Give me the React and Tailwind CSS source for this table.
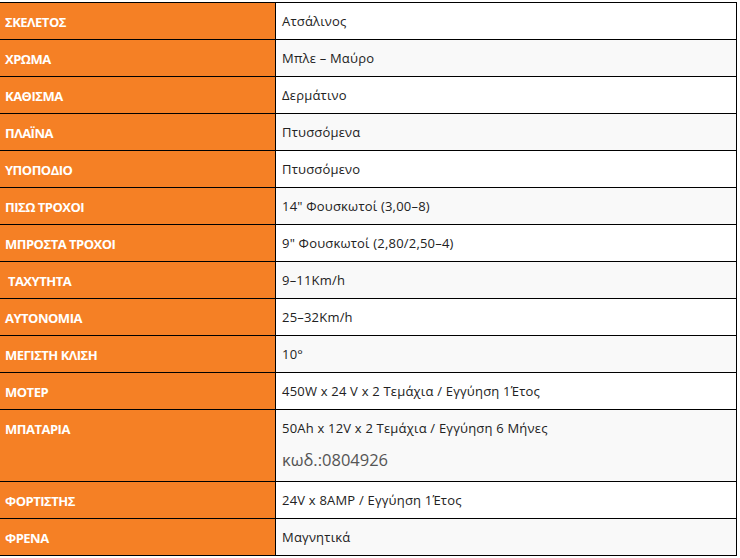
import React from "react";

const specs = [
  { label: "ΣΚΕΛΕΤΟΣ", value: "Ατσάλινος" },
  { label: "ΧΡΩΜΑ", value: "Μπλε – Μαύρο" },
  { label: "ΚΑΘΙΣΜΑ", value: "Δερμάτινο" },
  { label: "ΠΛΑΪΝΑ", value: "Πτυσσόμενα" },
  { label: "ΥΠΟΠΟΔΙΟ", value: "Πτυσσόμενο" },
  { label: "ΠΙΣΩ ΤΡΟΧΟΙ", value: "14\" Φουσκωτοί (3,00–8)" },
  { label: "ΜΠΡΟΣΤΑ ΤΡΟΧΟΙ", value: "9\" Φουσκωτοί (2,80/2,50–4)" },
  { label: "\u00a0ΤΑΧΥΤΗΤΑ", value: "9–11Km/h" },
  { label: "ΑΥΤΟΝΟΜΙΑ", value: "25–32Km/h" },
  { label: "ΜΕΓΙΣΤΗ ΚΛΙΣΗ", value: "10°" },
  { label: "ΜΟΤΕΡ", value: "450W x 24 V x 2 Τεμάχια / Εγγύηση 1Έτος" },
  { label: "ΜΠΑΤΑΡΙΑ", value: "50Ah x 12V x 2 Τεμάχια / Εγγύηση 6 Μήνες", code: "κωδ.:0804926" },
  { label: "ΦΟΡΤΙΣΤΗΣ", value: "24V x 8AMP / Εγγύηση 1Έτος" },
  { label: "ΦΡΕΝΑ", value: "Μαγνητικά" },
];

export default function App() {
  return (
    <div className="w-[740px] h-[558px] bg-white pt-[2px] font-['Open_Sans','Noto_Sans',sans-serif]">
      <div className="w-[737px] border-t border-r border-b border-black">
        {specs.map((row, i) => (
          <div
            key={i}
            className={`flex ${i > 0 ? "border-t border-black" : ""} ${i % 2 === 1 ? "bg-[#f9f9f9]" : "bg-white"}`}
          >
            <div className="w-[275px] shrink-0 bg-[#f58025] px-[5px] pt-[10px] pb-[8px] text-[13px] leading-[18px] font-bold text-white tracking-[-0.5px] whitespace-pre">
              {row.label}
            </div>
            <div className="flex-1 border-l border-black px-[6px] py-[9px] text-[13px] leading-[18px] tracking-[0.2px] text-[#222]">
              <div>{row.value}</div>
              {row.code && (
                <div className="mt-[12px] mb-[1px] text-[16.5px] leading-[22px] tracking-normal text-[#555]">{row.code}</div>
              )}
            </div>
          </div>
        ))}
      </div>
    </div>
  );
}
